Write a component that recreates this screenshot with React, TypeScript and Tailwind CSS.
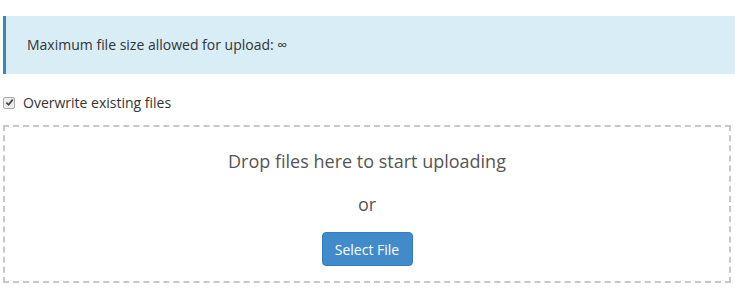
export default function App() {
  return (
    <div className="w-[735px] h-[300px] overflow-hidden bg-white font-['Open_Sans',sans-serif] text-[14px] text-[#333]">
      <div className="pl-[3px] pt-4">
        {/* Info alert */}
        <div className="flex h-[58px] items-center border-l-[3px] border-[#3a85c0] bg-[#d9edf7] pl-[21px]">
          <span className="mt-[-2px]">Maximum file size allowed for upload: ∞</span>
        </div>

        {/* Overwrite option */}
        <label className="mt-[18px] flex h-[21px] items-center gap-[8px]">
          <span className="flex h-[12px] w-[12px] items-center justify-center rounded-[2px] border border-[#a9a9a9] bg-[#ececec]">
            <svg viewBox="0 0 10 10" className="h-[9px] w-[9px]">
              <path d="M1.5 5.2 L4 7.6 L8.6 1.8" fill="none" stroke="#444" strokeWidth="1.9" />
            </svg>
          </span>
          <span>Overwrite existing files</span>
        </label>

        {/* Dropzone */}
        <div className="mt-[12px] mr-[4px] flex h-[158px] flex-col items-center border-2 border-dashed border-[#c8c8c8] pt-[21px]">
          <div className="text-[18px] text-[#555]">Drop files here to start uploading</div>
          <div className="mt-[16px] text-[18px] text-[#555]">or</div>
          <button className="mt-[14px] h-[34px] w-[91px] rounded-[4px] border border-[#357ebd] bg-[#428bca] text-[14px] text-white">
            Select File
          </button>
        </div>
      </div>
    </div>
  );
}
